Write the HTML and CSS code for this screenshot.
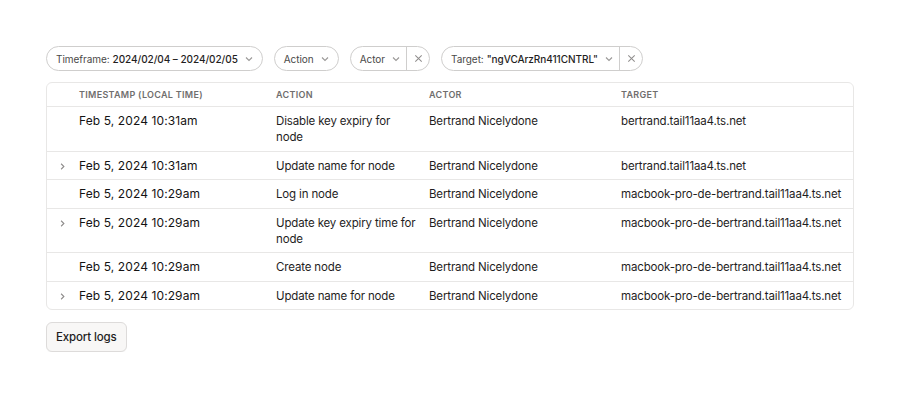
FILE: index.html
```html
<!DOCTYPE html>
<html lang="en">
<head>
  <meta charset="UTF-8">
  <meta name="viewport" content="width=device-width, initial-scale=1.0">
  <link rel="stylesheet" href="styles.css">
</head>
<body>
  <div class="page">
    <div class="filters">
      <button class="pill">
        <span class="pill-label">Timeframe:</span>
        <span class="pill-value">2024/02/04 – 2024/02/05</span>
        <svg class="caret" viewBox="0 0 12 12" fill="none" stroke="currentColor"><path d="M3 4.5l3 3 3-3"/></svg>
      </button>
      <button class="pill">
        <span class="pill-label">Action</span>
        <svg class="caret" viewBox="0 0 12 12" fill="none" stroke="currentColor"><path d="M3 4.5l3 3 3-3"/></svg>
      </button>
      <div class="pill split">
        <span class="split-main">
          <span class="pill-label">Actor</span>
          <svg class="caret" viewBox="0 0 12 12" fill="none" stroke="currentColor"><path d="M3 4.5l3 3 3-3"/></svg>
        </span>
        <span class="split-clear">
          <svg class="close" viewBox="0 0 12 12" fill="none" stroke="currentColor"><path d="M2.5 2.5l7 7M9.5 2.5l-7 7"/></svg>
        </span>
      </div>
      <div class="pill split">
        <span class="split-main">
          <span class="pill-label">Target:</span>
          <span class="pill-value">"ngVCArzRn411CNTRL"</span>
          <svg class="caret" viewBox="0 0 12 12" fill="none" stroke="currentColor"><path d="M3 4.5l3 3 3-3"/></svg>
        </span>
        <span class="split-clear">
          <svg class="close" viewBox="0 0 12 12" fill="none" stroke="currentColor"><path d="M2.5 2.5l7 7M9.5 2.5l-7 7"/></svg>
        </span>
      </div>
    </div>

    <div class="table-wrap">
      <table class="logs">
        <thead>
          <tr>
            <th class="col-toggle"></th>
            <th class="col-time">Timestamp (local time)</th>
            <th class="col-action">Action</th>
            <th class="col-actor">Actor</th>
            <th class="col-target">Target</th>
          </tr>
        </thead>
        <tbody>
          <tr>
            <td class="col-toggle"></td>
            <td class="col-time">Feb 5, 2024 10:31am</td>
            <td class="col-action">Disable key expiry for node</td>
            <td class="col-actor">Bertrand Nicelydone</td>
            <td class="col-target">bertrand.tail11aa4.ts.net</td>
          </tr>
          <tr>
            <td class="col-toggle"><svg class="chev" viewBox="0 0 12 12" fill="none" stroke="currentColor"><path d="M4.5 3l3 3-3 3"/></svg></td>
            <td class="col-time">Feb 5, 2024 10:31am</td>
            <td class="col-action">Update name for node</td>
            <td class="col-actor">Bertrand Nicelydone</td>
            <td class="col-target">bertrand.tail11aa4.ts.net</td>
          </tr>
          <tr>
            <td class="col-toggle"></td>
            <td class="col-time">Feb 5, 2024 10:29am</td>
            <td class="col-action">Log in node</td>
            <td class="col-actor">Bertrand Nicelydone</td>
            <td class="col-target">macbook-pro-de-bertrand.tail11aa4.ts.net</td>
          </tr>
          <tr>
            <td class="col-toggle"><svg class="chev" viewBox="0 0 12 12" fill="none" stroke="currentColor"><path d="M4.5 3l3 3-3 3"/></svg></td>
            <td class="col-time">Feb 5, 2024 10:29am</td>
            <td class="col-action">Update key expiry time for node</td>
            <td class="col-actor">Bertrand Nicelydone</td>
            <td class="col-target">macbook-pro-de-bertrand.tail11aa4.ts.net</td>
          </tr>
          <tr>
            <td class="col-toggle"></td>
            <td class="col-time">Feb 5, 2024 10:29am</td>
            <td class="col-action">Create node</td>
            <td class="col-actor">Bertrand Nicelydone</td>
            <td class="col-target">macbook-pro-de-bertrand.tail11aa4.ts.net</td>
          </tr>
          <tr>
            <td class="col-toggle"><svg class="chev" viewBox="0 0 12 12" fill="none" stroke="currentColor"><path d="M4.5 3l3 3-3 3"/></svg></td>
            <td class="col-time">Feb 5, 2024 10:29am</td>
            <td class="col-action">Update name for node</td>
            <td class="col-actor">Bertrand Nicelydone</td>
            <td class="col-target">macbook-pro-de-bertrand.tail11aa4.ts.net</td>
          </tr>
        </tbody>
      </table>
    </div>

    <div class="footer">
      <button class="export-btn">Export logs</button>
    </div>
  </div>
</body>
</html>
```

FILE: styles.css
```css
:root {
  --text-primary: #1f1e1e;
  --text-muted: #706e6d;
  --border-color: #e8e7e6;
  --pill-border: #cfcecd;
  --btn-bg: #f8f7f6;
}

body {
  margin: 0;
  background: #fff;
  font-family: Inter, "Noto Sans", sans-serif;
  color: var(--text-primary);
}

.page {
  padding: 46px 46px 0 46px;
  width: 808px;
}

/* Filter pills */
.filters {
  display: flex;
  gap: 11px;
  align-items: center;
}

.pill {
  display: flex;
  align-items: center;
  gap: 3px;
  height: 25px;
  box-sizing: border-box;
  padding: 0 7px 0 9px;
  border: 1px solid var(--pill-border);
  border-radius: 999px;
  background: #fff;
  font-family: inherit;
  font-size: 10px;
  letter-spacing: -0.05px;
  color: var(--text-primary);
}

.pill-label {
  color: #4a4948;
}

.pill-value {
  font-weight: 500;
  color: var(--text-primary);
}

.caret {
  width: 12px;
  height: 12px;
  color: #9a9897;
  stroke-width: 1.1;
  margin-left: 2px;
}

.pill.split {
  padding: 0;
  gap: 0;
}

.split-main {
  display: flex;
  align-items: center;
  gap: 3px;
  height: 100%;
  padding: 0 4px 0 9px;
  border-right: 1px solid var(--pill-border);
}

.split-clear {
  display: flex;
  align-items: center;
  justify-content: center;
  width: 22px;
  height: 100%;
}

.close {
  width: 11px;
  height: 11px;
  color: #8f8d8c;
  stroke-width: 1.1;
}

/* Table */
.table-wrap {
  margin-top: 11px;
  border: 1px solid var(--border-color);
  border-radius: 6px;
  overflow: hidden;
}

.logs {
  width: 100%;
  border-collapse: collapse;
  table-layout: fixed;
  font-size: 11.5px;
  letter-spacing: -0.15px;
  line-height: 16px;
}

.logs th {
  text-align: left;
  font-size: 9px;
  font-weight: 600;
  letter-spacing: 0.3px;
  line-height: 12px;
  text-transform: uppercase;
  color: var(--text-muted);
  padding: 6px 0 5px;
}

.logs td {
  vertical-align: top;
  padding: 6px 0 5.5px;
  border-top: 1px solid var(--border-color);
}

.col-toggle {
  width: 32px;
}

.col-time {
  width: 197px;
}

.logs td.col-time {
  font-size: 12px;
  letter-spacing: 0.1px;
  color: #141313;
}

.col-action {
  width: 153px;
  padding-right: 12px !important;
  box-sizing: border-box;
}

.col-actor {
  width: 192px;
}

.chev {
  display: block;
  width: 11px;
  height: 11px;
  margin: 3px 0 0 10px;
  color: #8f8d8c;
  stroke-width: 1.2;
}

/* Footer */
.footer {
  margin-top: 12px;
}

.export-btn {
  height: 30px;
  padding: 0 9px;
  border: 1px solid #dddbda;
  border-radius: 6px;
  background: var(--btn-bg);
  font-family: inherit;
  font-size: 11.5px;
  font-weight: 500;
  letter-spacing: -0.15px;
  color: var(--text-primary);
  box-shadow: 0 1px 1px rgba(0, 0, 0, 0.03);
}
```
